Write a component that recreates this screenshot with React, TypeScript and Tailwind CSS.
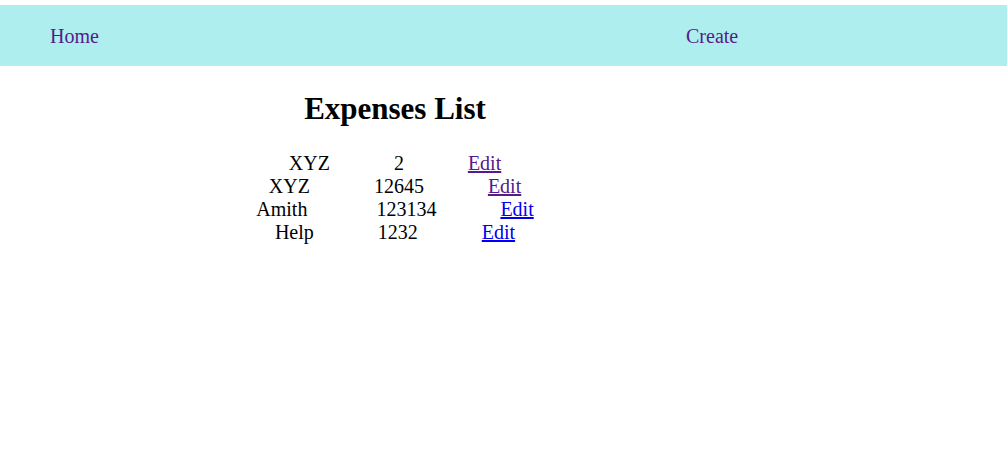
import React from 'react';

interface Expense {
  name: string;
  amount: number;
  visited: boolean;
  nameGap?: string;
}

const expenses: Expense[] = [
  { name: 'XYZ', amount: 2, visited: true },
  { name: 'XYZ', amount: 12645, visited: true },
  { name: 'Amith', amount: 123134, visited: false, nameGap: 'mr-[69px]' },
  { name: 'Help', amount: 1232, visited: false },
];

const App: React.FC = () => {
  return (
    <div className="min-h-[465px] bg-white pt-[5px] font-['Liberation_Serif',serif] text-black">
      {/* Nav */}
      <nav className="flex h-[61px] items-center bg-[#afeeee] text-[20px] text-[#551a8b]">
        <a href="#" className="ml-[50px] w-[636px] leading-[22px]">Home</a>
        <a href="#" className="leading-[22px]">Create</a>
      </nav>

      <div className="w-[790px]">
        <h2 className="mt-[25px] text-center text-[31px] font-bold leading-[35px]">Expenses List</h2>

        <div className="mt-[26px] text-[20px] leading-[23px]">
          {expenses.map((e, i) => (
            <div key={i} className="flex justify-center">
              <span className={e.nameGap ?? 'mr-[64px]'}>{e.name}</span>
              <span className="mr-[64px]">{e.amount}</span>
              <a href="#" className={`underline ${e.visited ? 'text-[#551a8b]' : 'text-[#0000ee]'}`}>Edit</a>
            </div>
          ))}
        </div>
      </div>
    </div>
  );
};

export default App;
